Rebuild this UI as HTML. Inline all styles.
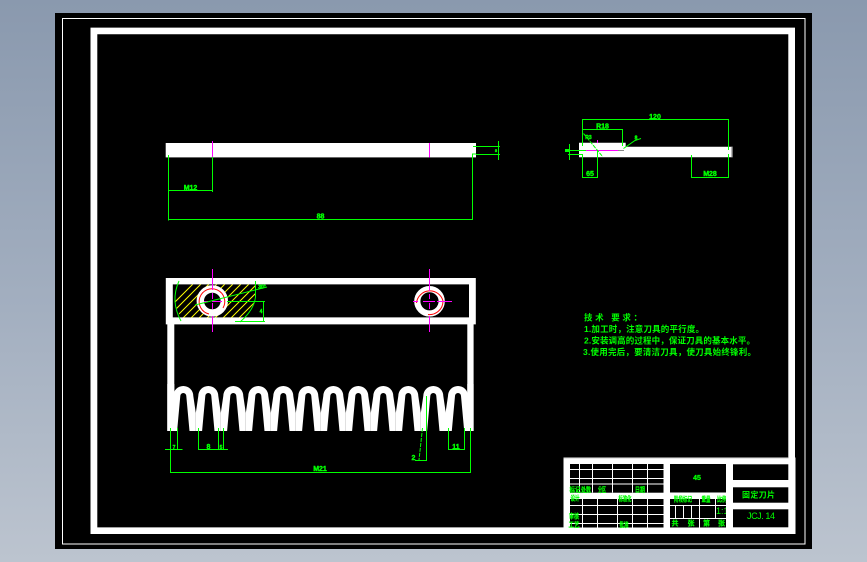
<!DOCTYPE html>
<html>
<head>
<meta charset="utf-8">
<style>
html,body{margin:0;padding:0;width:867px;height:562px;overflow:hidden;background:linear-gradient(180deg,#8a99ae 0%,#a3afc0 55%,#bcc4cf 100%)}
svg{position:absolute;left:0;top:0;display:block}
text{font-family:"Liberation Sans","Noto Sans CJK SC",sans-serif;fill:#0f0}
.g{stroke:#0f0;stroke-width:1;fill:none}
.m{stroke:#f0f;stroke-width:1;fill:none}
.w{stroke:#fff;stroke-width:1;fill:none}
.s{font-size:7px;font-weight:bold;text-anchor:middle;stroke:#0f0;stroke-width:.4}
.t{font-size:7px;font-weight:bold;text-anchor:middle;stroke:#0f0;stroke-width:.2}
.n{font-size:8.5px}
</style>
</head>
<body>
<svg width="867" height="562" viewBox="0 0 867 562" xmlns="http://www.w3.org/2000/svg">
<defs>
<clipPath id="h"><path d="M174,284.5 L256,284.5 L255.5,301 L247,313 L240,317.5 L181,317.5 Q174,305 174,296 Z"/></clipPath>
<g id="a">
<path fill="#fff" d="M-12.5,431 L-12.5,413 L-10,396 A10,10 0 0 1 10,396 L12.5,413 L12.5,431 Z"/>
<path fill="#000" d="M-6.2,431 L-3,396 A3,3 0 0 1 3,396 L6.2,431 Z"/>
</g>
</defs>

<rect x="55" y="13" width="757" height="536" fill="#000"/>
<rect x="62.5" y="18.5" width="742.5" height="525.5" fill="none" stroke="#fff" stroke-width="1"/>
<path fill="#fff" fill-rule="evenodd" d="M90.5,27.6H795V534H90.5Z M97.3,34.3V527.4H788.3V34.3Z"/>

<!-- top view -->
<rect x="165.7" y="143" width="310.3" height="14.4" fill="#fff"/>
<path d="M212.5,141V157.5M429.5,143V157.5" class="m"/>
<g class="g">
<path d="M168.5,155V220.5M212.5,157V192M168.5,190.5H212.5M168.5,219.5H472.5V154H476"/>
<path d="M473,146.5H500M476,154.5H500M498.5,141V160"/>
</g>
<text class="s" x="190.5" y="190">M12</text>
<text class="s" x="320.5" y="218.5">88</text>
<text class="s" x="496" y="152" style="font-size:4px">5</text>

<!-- side view -->
<path fill="#fff" d="M579,142.7H625.7V146.7H732.7V157.3H579Z"/>
<path d="M732,147V157.5" stroke="#777" stroke-width="1"/>
<path d="M585.7,150.5H618" class="m"/>
<path d="M618,150.5H624" stroke="#888" stroke-width="1"/>
<path d="M597.5,140V143M597.5,150V157" class="m"/>
<g class="g">
<path d="M582.5,146V119.5H728.5V150M582.5,129.5H622.5V146"/>
<path d="M623.5,148.5L635,140.5L641,138.5"/>
<path d="M583.5,133.5L602.7,156.7" stroke-dasharray="4 1"/>
<path d="M569.5,144V160M565,150.5H586M568,154.5H582.5V177.5H597.5V150M691.5,155V177.5H728.5V154"/>
</g>
<rect x="565" y="149" width="4" height="3" fill="#0f0"/>
<text class="s" x="655" y="119">120</text>
<text class="s" x="602.5" y="128.5">R18</text>
<text class="s" x="636" y="139.5" style="font-size:5px">8</text>
<text class="s" x="588.5" y="139" style="font-size:5px">R3</text>
<text class="s" x="590" y="176">65</text>
<text class="s" x="710" y="176">M28</text>

<!-- front view -->
<path fill="#fff" fill-rule="evenodd" d="M165.8,278H475.8V324.4H165.8Z M172.8,284.4V317.4H469V284.4Z"/>
<path fill="#fff" d="M167.3,324H174.3V431H167.3ZM467.3,324H473.6V431H467.3Z"/>
<use href="#a" x="183.3"/><use href="#a" x="208.3"/><use href="#a" x="233.3"/><use href="#a" x="258.3"/>
<use href="#a" x="283.3"/><use href="#a" x="308.3"/><use href="#a" x="333.3"/><use href="#a" x="358.3"/>
<use href="#a" x="383.3"/><use href="#a" x="408.3"/><use href="#a" x="433.3"/><use href="#a" x="458"/>
<rect x="167.3" y="384" width="7" height="47" fill="#fff"/>
<rect x="174" y="405" width="3" height="26" fill="#fff"/>
<rect x="467.3" y="384" width="6.3" height="47" fill="#fff"/>

<!-- hatch -->
<g clip-path="url(#h)" stroke="#ff0" stroke-width="1">
<path d="M160,325L205,280M168,325L213,280M176,325L221,280M184,325L229,280M192,325L237,280M200,325L245,280M208,325L253,280M216,325L261,280M224,325L269,280M232,325L277,280M240,325L285,280M152,325L197,280"/>
</g>
<path d="M179,281Q170,301 181,321" class="g"/>
<path d="M255.5,281V297Q254,310 240,322" class="g"/>

<!-- holes -->
<circle cx="212.3" cy="301" r="12" fill="#000" stroke="#fff" stroke-width="7.4"/>
<circle cx="429.5" cy="301.3" r="12.2" fill="#000" stroke="#fff" stroke-width="6.2"/>
<path d="M209,314 A12.8,12.8 0 1 1 223,308" fill="none" stroke="#f00" stroke-width="1"/>
<path d="M428,314.5 A13.5,13.5 0 0 0 443,301 A13.5,13.5 0 0 0 416.5,303" fill="none" stroke="#f00" stroke-width="1"/>
<path d="M212.5,269V290M212.5,293V299M212.5,303V309M212.5,316V332M204,301.5H208M212,301.5H222" class="m"/>
<path d="M429.5,269V291M429.5,294V299M429.5,303V309M429.5,316V332M413,301.5H418M423,301.5H435M437,301.5H452" class="m"/>
<g class="g">
<path d="M195,305L267,287M227,301.5H265M263.5,301.5V321.5M235,321.5H265"/>
</g>
<text class="s" x="262" y="288.5" style="font-size:5px">30°</text>
<text class="s" x="261" y="313" style="font-size:5px">4</text>

<!-- teeth dims -->
<g class="g">
<path d="M170.5,428V473M470.5,428V473M170.5,472.5H470.5"/>
<path d="M177.5,428V450M165,449.5H182.5"/>
<path d="M198.5,428V450M218.5,428V450M223.5,428V450M198.5,449.5H228"/>
<path d="M448.5,428V450M464.5,428V450M448.5,449.5H464.5"/>
<path d="M426.5,396V461M415,460.5H426.5"/>
<path d="M422.5,428L419,460" stroke-dasharray="4 1"/>
</g>
<text class="s" x="320" y="471">M21</text>
<text class="s" x="174" y="449" style="font-size:5px">7</text>
<text class="s" x="208.5" y="449">8</text>
<text class="s" x="221" y="449" style="font-size:5px">5</text>
<text class="s" x="456" y="449">11</text>
<text class="s" x="413.5" y="460" style="font-size:7px">2</text>

<!-- tech requirements -->
<g style="font-weight:bold">
<text class="n" x="584" y="320.5" textLength="58" lengthAdjust="spacing">技术 要求：</text>
<text class="n" x="584" y="332" textLength="120" lengthAdjust="spacing">1.加工时，注意刀具的平行度。</text>
<text class="n" x="584" y="343.5" textLength="171" lengthAdjust="spacing">2.安装调高的过程中，保证刀具的基本水平。</text>
<text class="n" x="583" y="355" textLength="173" lengthAdjust="spacing">3.使用完后，要清洁刀具，使刀具始终锋利。</text>
</g>

<!-- title block -->
<rect x="563.5" y="457.5" width="232" height="76.5" fill="#fff"/>
<path d="M563.5,457.8H788.5" stroke="#999" stroke-width="1"/>
<rect x="570" y="464" width="93.5" height="28.7" fill="#000"/>
<rect x="570" y="499" width="93.5" height="28.5" fill="#000"/>
<rect x="670" y="464" width="56" height="28.5" fill="#000"/>
<rect x="670" y="499" width="56" height="28.5" fill="#000"/>
<rect x="733" y="464.3" width="55.3" height="15.7" fill="#000"/>
<rect x="733" y="487.3" width="55.3" height="15.4" fill="#000"/>
<rect x="733" y="509.3" width="55.3" height="18" fill="#000"/>
<path class="w" d="M570,469.5H663.5M570,478.5H663.5M570,484H663.5M579.5,464V492.5M592.5,464V492.5M612.5,464V492.5M632.5,464V492.5M647.5,464V492.5"/>
<path class="w" d="M570,505.5H663.5M570,514.5H663.5M570,523.5H663.5M582.5,499V527.5M597.5,499V527.5M617.5,499V527.5M632.5,499V527.5M647.5,499V527.5"/>
<path class="w" d="M670,505.5H726M670,518.5H726M699.5,499V527.5M715.5,499V518M675.5,505V518M683.5,505V518M691.5,505V518"/>

<g>
<text class="t" x="575" y="492" textLength="11" lengthAdjust="spacingAndGlyphs">标记</text>
<text class="t" x="586" y="492" textLength="10" lengthAdjust="spacingAndGlyphs">处数</text>
<text class="t" x="602" y="492" textLength="8" lengthAdjust="spacingAndGlyphs">分区</text>
<text class="t" x="640" y="492" textLength="10" lengthAdjust="spacingAndGlyphs">日期</text>
<text class="t" x="575" y="500.5" textLength="9" lengthAdjust="spacingAndGlyphs">设计</text>
<text class="t" x="625" y="501" textLength="13" lengthAdjust="spacingAndGlyphs">标准化</text>
<text class="t" x="574" y="518.5" textLength="10" lengthAdjust="spacingAndGlyphs">审核</text>
<text class="t" x="574" y="527" textLength="11" lengthAdjust="spacingAndGlyphs">工艺</text>
<text class="t" x="624" y="527" textLength="9" lengthAdjust="spacingAndGlyphs">批准</text>
<text class="t" x="683" y="501.5" textLength="18" lengthAdjust="spacingAndGlyphs">阶段标记</text>
<text class="t" x="706" y="501.5" textLength="9" lengthAdjust="spacingAndGlyphs">重量</text>
<text class="t" x="722" y="501.5" textLength="10" lengthAdjust="spacingAndGlyphs">比例</text>
<text x="716" y="514" style="font-size:9px">1:1</text>
<text class="t" x="683" y="525.5" textLength="23" lengthAdjust="spacing">共 张</text>
<text class="t" x="714" y="525.5" textLength="22" lengthAdjust="spacing">第 张</text>
<text x="697" y="480" style="font-size:7px;font-weight:bold;text-anchor:middle;stroke:#0f0;stroke-width:.3">45</text>
<text x="742" y="497.5" textLength="33" lengthAdjust="spacing" style="font-size:8px;font-weight:bold">固定刀片</text>
<text x="747" y="519" textLength="28" lengthAdjust="spacing" style="font-size:9px">JCJ. 14</text>
</g>
<rect x="726" y="495" width="7" height="33" fill="#fff"/>
</svg>
</body>
</html>
